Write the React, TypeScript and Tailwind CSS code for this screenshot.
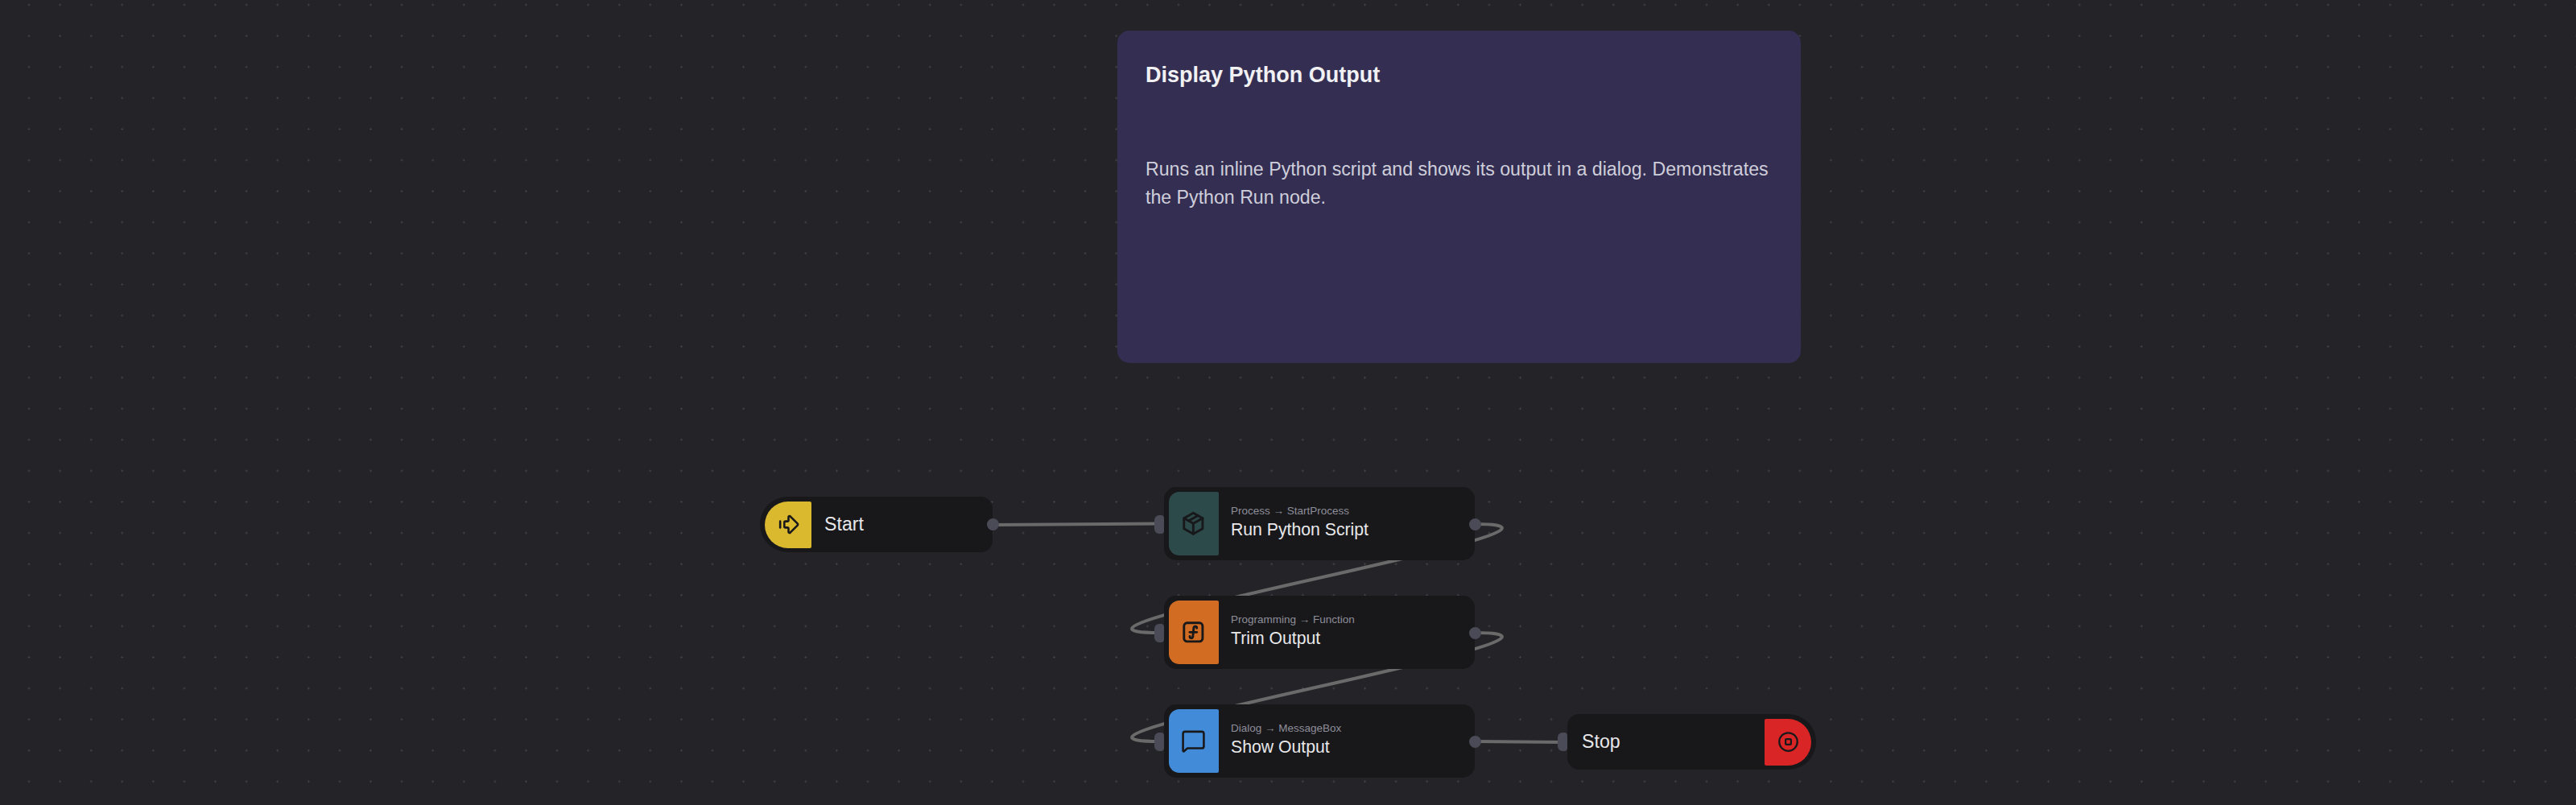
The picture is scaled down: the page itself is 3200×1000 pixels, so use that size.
import { ArrowBigRightDash, CircleStop, MessageSquare } from "lucide-react";
import { TbFunction, TbPackage } from "react-icons/tb";
import type { ReactNode } from "react";

// ── Flow nodes ────────────────────────────────────────────────────────────

function Handle({ className }: { className: string }) {
  return <div className={`absolute bg-[#4b4b57] ${className}`} />;
}

function ActionNode(props: {
  position: string;
  accent: string;
  icon: ReactNode;
  kind: string;
  method: string;
  title: string;
}) {
  return (
    <div className={`absolute flex h-[91px] w-[386px] items-center rounded-[15px] bg-[#18181b] p-[5.5px] ${props.position}`}>
      <div className={`flex h-[79px] w-[62px] items-center justify-center rounded-l-[13px] rounded-r-[2px] text-[#18181b] ${props.accent}`}>
        {props.icon}
      </div>
      <div className="ml-[15.5px] flex flex-col -translate-y-[2px]">
        <div className="text-[13.5px] leading-[20px] text-[#8e8e99] whitespace-pre">
          {props.kind} → {props.method}
        </div>
        <div className="-mt-[1px] text-[21.23px] leading-[28px] text-[#e8e8ea]">{props.title}</div>
      </div>
      <Handle className="-left-[12px] top-[35px] h-[23px] w-[12px] rounded-l-[6px] rounded-r-[4px]" />
      <Handle className="-right-[7.5px] top-[38.5px] h-[15px] w-[15px] rounded-full" />
    </div>
  );
}

export default function App() {
  return (
    <div className="relative h-[1000px] w-[3200px] overflow-hidden bg-[#232328] bg-[radial-gradient(circle,#3f3f45_1px,transparent_1.2px)] bg-[size:38.6px_38.6px] bg-[position:16.7px_-13.3px] font-['Liberation_Sans',sans-serif]">
      {/* Comment note */}
      <div className="absolute left-[1388px] top-[38px] h-[413px] w-[849px] rounded-[15px] bg-[#342e52] px-[35px] pt-[36px]">
        <h2 className="text-[27.02px] font-bold leading-[38px] text-[#f1f1f4]">Display Python Output</h2>
        <p className="mt-[81px] text-[23.16px] leading-[34.74px] text-[#cfcfdb]">
          Runs an inline Python script and shows its output in a dialog. Demonstrates the Python Run node.
        </p>
      </div>

      {/* Edges */}
      <svg className="absolute left-0 top-0" width="3200" height="1000" fill="none" stroke="#6a6a6a" strokeWidth="4">
        <path d="M1233 652 L1440 650.5" />
        <path d="M1832 651 C2037 651 1235 786 1440 786" />
        <path d="M1832 786 C2037 786 1235 921 1440 921" />
        <path d="M1832 921 L1942 922" />
      </svg>

      {/* Start */}
      <div className="absolute left-[944px] top-[617px] flex h-[69px] w-[289px] items-center rounded-l-[35px] rounded-r-[15px] bg-[#18181b] p-[6px]">
        <div className="flex h-[58px] w-[58px] items-center justify-center rounded-l-[29px] rounded-r-[2px] bg-[#dbb92f] text-[#18181b]">
          <ArrowBigRightDash size={31} />
        </div>
        <span className="ml-[16px] text-[23.16px] text-[#e8e8ea]">Start</span>
        <Handle className="-right-[7.5px] top-[27px] h-[15px] w-[15px] rounded-full" />
      </div>

      <ActionNode
        position="left-[1446px] top-[605px]"
        accent="bg-[#2d4a4a]"
        icon={<TbPackage size={34.7} />}
        kind="Process"
        method="StartProcess"
        title="Run Python Script"
      />
      <ActionNode
        position="left-[1446px] top-[740px]"
        accent="bg-[#d26c22]"
        icon={<TbFunction size={34.7} />}
        kind="Programming"
        method="Function"
        title="Trim Output"
      />
      <ActionNode
        position="left-[1446px] top-[875px]"
        accent="bg-[#428bd9]"
        icon={<MessageSquare size={31} />}
        kind="Dialog"
        method="MessageBox"
        title="Show Output"
      />

      {/* Stop */}
      <div className="absolute left-[1947px] top-[887px] flex h-[69px] w-[309px] items-center justify-between rounded-l-[15px] rounded-r-[35px] bg-[#18181b] p-[6px]">
        <span className="ml-[12px] text-[23.16px] text-[#e8e8ea]">Stop</span>
        <div className="flex h-[58px] w-[58px] items-center justify-center rounded-l-[2px] rounded-r-[29px] bg-[#d92525] text-[#18181b]">
          <CircleStop size={27} />
        </div>
        <Handle className="-left-[12px] top-[23px] h-[23px] w-[12px] rounded-l-[6px] rounded-r-[4px]" />
      </div>
    </div>
  );
}
